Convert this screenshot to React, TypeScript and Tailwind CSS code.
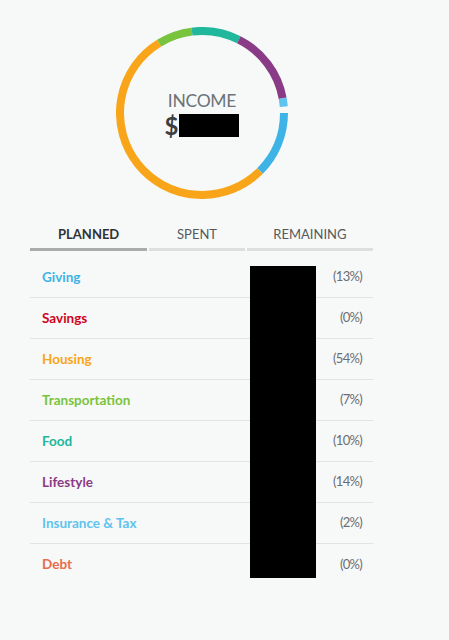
import React from "react";

const ROWS = [
  { name: "Giving", color: "#3eb3e6", pct: "(13%)" },
  { name: "Savings", color: "#d0021b", pct: "(0%)" },
  { name: "Housing", color: "#f9a51a", pct: "(54%)" },
  { name: "Transportation", color: "#78c43e", pct: "(7%)" },
  { name: "Food", color: "#20b79c", pct: "(10%)" },
  { name: "Lifestyle", color: "#8a3b86", pct: "(14%)" },
  { name: "Insurance & Tax", color: "#5ec3ee", pct: "(2%)" },
  { name: "Debt", color: "#e96b4c", pct: "(0%)" },
];

// angles in degrees, clockwise from 3 o'clock
const ARCS = [
  { from: 0, to: 45, color: "#3eb3e6" },
  { from: 45, to: 238.5, color: "#f9a51a" },
  { from: 238.5, to: 263, color: "#78c43e" },
  { from: 263, to: 296.7, color: "#20b79c" },
  { from: 296.7, to: 349.6, color: "#8a3b86" },
  { from: 349.6, to: 355.5, color: "#5ec3ee" },
];

function arc(cx: number, cy: number, r: number, a0: number, a1: number) {
  const p = (a: number) => [cx + r * Math.cos((a * Math.PI) / 180), cy + r * Math.sin((a * Math.PI) / 180)];
  const [x0, y0] = p(a0);
  const [x1, y1] = p(a1);
  const large = a1 - a0 > 180 ? 1 : 0;
  return `M ${x0} ${y0} A ${r} ${r} 0 ${large} 1 ${x1} ${y1}`;
}

function Donut() {
  return (
    <div className="relative w-[172px] h-[172px] ml-[86px]">
      <svg className="absolute inset-0" width={172} height={172} viewBox="0 0 172 172">
        {ARCS.map((a) => (
          <path key={a.from} d={arc(86, 86, 82, a.from, a.to)} fill="none" stroke={a.color} strokeWidth={8} />
        ))}
      </svg>
      <div className="absolute inset-0 flex flex-col items-center justify-center pt-[2px]">
        <span className="text-[17.5px] leading-[20px] text-[#6c7378] tracking-[-0.3px]">INCOME</span>
        <div className="flex items-center mt-[3px]">
          <span className="text-[24px] leading-[24px] font-bold text-[#3c3f42]">$</span>
          <div className="w-[60px] h-[23px] bg-black ml-[1px]" />
        </div>
      </div>
    </div>
  );
}

export default function App() {
  return (
    <div className="w-[449px] h-[640px] bg-[#f7f8f8] font-['Lato','Liberation_Sans',sans-serif]">
      <div className="pl-[30px] pt-[27px] w-[373px]">
        <Donut />

        {/* Tabs */}
        <div className="flex gap-[2px] mt-[27px] text-[13px] leading-[16px]">
          <div className="w-[118px] text-center pb-[6px] border-b-[3px] border-[#a9abad] font-bold text-[#2f3336]">PLANNED</div>
          <div className="w-[96px] text-center pb-[6px] border-b-[3px] border-[#dcdedf] text-[#55595c]">SPENT</div>
          <div className="w-[127px] text-center pb-[6px] border-b-[3px] border-[#dcdedf] text-[#55595c]">REMAINING</div>
        </div>

        {/* Table */}
        <div className="relative mt-[6px] w-[343px]">
          {ROWS.map((r, i) => (
            <div
              key={r.name}
              className={`flex items-center justify-between h-[41px] pl-[12px] pr-[11px] ${i < ROWS.length - 1 ? "border-b border-[#e1e3e4]" : ""}`}
            >
              <span className="text-[13.5px] font-bold" style={{ color: r.color }}>{r.name}</span>
              <span className="text-[13px] tracking-[-0.7px] text-[#6a6e71]">{r.pct}</span>
            </div>
          ))}
          <div className="absolute left-[220px] top-[9px] w-[66px] h-[312px] bg-black" />
        </div>
      </div>
    </div>
  );
}
